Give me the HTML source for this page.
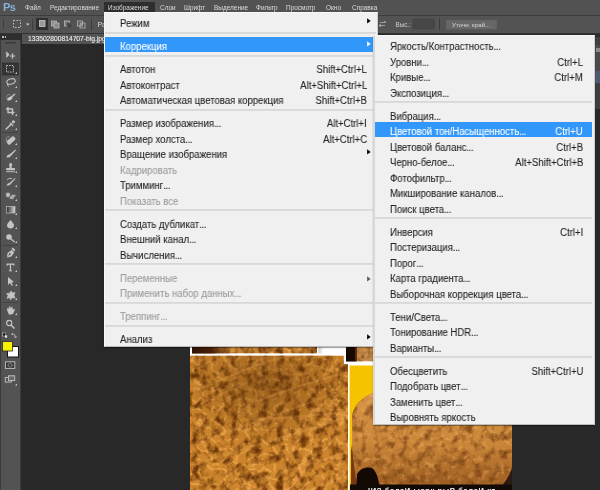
<!DOCTYPE html>
<html><head><meta charset="utf-8"><style>
*{margin:0;padding:0;box-sizing:border-box}
html,body{width:600px;height:490px;overflow:hidden;background:#282828;font-family:"Liberation Sans", sans-serif;-webkit-font-smoothing:antialiased}
.abs,div{position:absolute}
.menu{background:#f0f0f0;border:1px solid;border-color:#f8f8f8 #cfcfcf #bdbdbd #f8f8f8;box-shadow:0 1px 1px rgba(0,0,0,.35)}
.sub{border-left:2px solid #d8d8d8}
.sep{height:2px;background:linear-gradient(#d6d6d6,#dedede)}
.hl{background:#3297fa}
.t{font-size:10px;line-height:12px;color:#222;white-space:nowrap;will-change:transform;-webkit-text-stroke:0.08px currentColor;transform:scaleX(0.955);transform-origin:0 0}
.sc{transform-origin:100% 0}
.hlt{color:#fff}
.dis{color:#9a9a9a}
.arr{width:0;height:0;border-top:2.9px solid transparent;border-bottom:2.9px solid transparent;border-left:3.6px solid #000}
.mb{font-size:6.45px;line-height:8px;color:#dcdcdc;white-space:nowrap;top:3.5px;will-change:transform}
</style></head><body>
<!-- menubar -->
<div style="left:0;top:0;width:600px;height:16px;background:#525252;border-bottom:1px solid #3d3d3d"></div>
<div style="left:3px;top:1px;font-size:11px;font-weight:bold;color:#88afd8;line-height:13px;letter-spacing:-0.5px;will-change:transform">Ps</div>
<div class="mb" style="left:25px">Файл</div>
<div class="mb" style="left:50px">Редактирование</div>
<div style="left:104px;top:2px;width:51px;height:10px;background:#2e2e2e"></div>
<div class="mb" style="left:107.5px">Изображение</div>
<div class="mb" style="left:159.5px">Слои</div>
<div class="mb" style="left:183.5px">Шрифт</div>
<div class="mb" style="left:213.5px">Выделение</div>
<div class="mb" style="left:256.4px">Фильтр</div>
<div class="mb" style="left:286.4px">Просмотр</div>
<div class="mb" style="left:326px">Окно</div>
<div class="mb" style="left:351.5px">Справка</div>
<!-- options bar -->
<div style="left:0;top:16px;width:600px;height:18px;background:#535353;border-bottom:1px solid #333"></div>

<svg style="position:absolute;left:0;top:15px;will-change:transform" width="600" height="18" viewBox="0 15 600 18">
 <rect x="3" y="19" width="1" height="10" fill="#3e3e3e"/>
 <rect x="13.5" y="20.5" width="7" height="7" fill="none" stroke="#c4c4c4" stroke-width="1" stroke-dasharray="1.5 1.5"/>
 <path d="M26 23.5 L29.5 23.5 L27.75 25.5 Z" fill="#d8d8d8"/>
 <rect x="32" y="19" width="1" height="11" fill="#3c3c3c"/>
 <rect x="36" y="18" width="12" height="12" fill="#2f2f2f"/>
 <rect x="39.5" y="20.5" width="5.5" height="6" fill="#9a9a9a" stroke="#c8c8c8" stroke-width="0.8"/>
 <rect x="51.5" y="21" width="5" height="5" fill="#8a8a8a" stroke="#b8b8b8" stroke-width="0.8"/>
 <rect x="54" y="23" width="5" height="5" fill="#8a8a8a" stroke="#b8b8b8" stroke-width="0.8"/>
 <rect x="64.5" y="21" width="5" height="5" fill="#7a7a7a" stroke="#b8b8b8" stroke-width="0.8"/>
 <rect x="67" y="23" width="5" height="5" fill="#454545" stroke="#5a5a5a" stroke-width="0.8"/>
 <rect x="77.5" y="21" width="5" height="5" fill="none" stroke="#b8b8b8" stroke-width="0.8"/>
 <rect x="80" y="23" width="5" height="5" fill="none" stroke="#b8b8b8" stroke-width="0.8"/>
 <rect x="80" y="23" width="2.5" height="3" fill="#9a9a9a"/>
 <rect x="91" y="19" width="1" height="11" fill="#3c3c3c"/>
 <text x="97.5" y="27" font-family="Liberation Sans" font-size="7" fill="#dcdcdc">Растушевка</text>
 <path d="M380 22.5 H386 M384 21 L386 22.5 M379 25.5 H385 M381 24 L379 25.5 M381 27 L379 25.5" stroke="#a8a8a8" stroke-width="0.9" fill="none"/>
 <text x="395.5" y="26.5" font-family="Liberation Sans" font-size="6.3" fill="#cfcfcf">Выс.:</text>
 <rect x="413" y="19" width="21.5" height="10" fill="#474747" stroke="#404040" stroke-width="0.5"/>
 <rect x="439" y="18" width="1" height="12" fill="#3c3c3c"/>
 <rect x="446" y="20" width="51" height="9.5" rx="1" fill="#676767" stroke="#5c5c5c" stroke-width="0.6"/>
 <text x="452" y="27" font-family="Liberation Sans" font-size="6.2" fill="#d8d8d8">Уточн. край...</text>
</svg>
<!-- right strip -->
<div style="left:594px;top:34px;width:6px;height:3px;background:#2b2b2b"></div>
<div style="left:594px;top:37px;width:6px;height:8px;background:#404040"></div>
<div style="left:594px;top:45px;width:6px;height:26px;background:#4a4a4a"></div>
<div style="left:596px;top:48px;width:4px;height:4px;background:#8a8a8a"></div>
<div style="left:594px;top:71px;width:6px;height:12px;background:#4e5a72"></div>
<div style="left:594px;top:83px;width:6px;height:26px;background:#3e3e3e"></div>
<!-- toolbar -->
<div style="left:0;top:34px;width:21px;height:6px;background:#2e2e2e"></div>
<div style="left:2px;top:35.5px;width:1.6px;height:2.5px;background:#bbb"></div><div style="left:4.6px;top:35.5px;width:1.6px;height:2.5px;background:#bbb"></div>
<div style="left:0;top:40px;width:21px;height:450px;background:#535353;border-left:1px solid #3a3a3a;border-right:1px solid #3c3c3c"></div>
<svg style="position:absolute;left:0;top:0" width="20" height="490" viewBox="0 0 20 490"><rect x="5" y="42" width="11" height="1.5" fill="#3a3a3a"/><path d="M6.3 51.8 L6.6 57.5 L9.3 54.6 Z" fill="#c4c4c4" stroke="#c4c4c4" stroke-width="0.5" stroke-linejoin="round"/><path d="M9.8 56 H15.2 M12.5 53.3 V58.7" stroke="#c4c4c4" stroke-width="1.2"/><rect x="2.5" y="63" width="16" height="12" fill="#353535" stroke="#2a2a2a" stroke-width="0.6"/><rect x="6.5" y="65.5" width="7" height="6.5" fill="none" stroke="#c4c4c4" stroke-width="1" stroke-dasharray="1.4 1.2"/><path d="M15 74 L17 72 L17 74 Z" fill="#d0d0d0"/><ellipse cx="11" cy="81.5" rx="4.3" ry="2.6" fill="none" stroke="#c4c4c4" stroke-width="1.1" transform="rotate(-15 11 81.5)"/><path d="M7.5 83.5 Q7 86 9 86.5" stroke="#c4c4c4" fill="none" stroke-width="1"/><path d="M15 88 L17 86 L17 88 Z" fill="#d0d0d0"/><path d="M7.3 100.5 Q6 96.5 7.3 95 Q9 93.8 10.8 95.2" stroke="#8c8c8c" stroke-width="0.8" fill="none"/><path d="M11.3 97.3 L14.6 94.2" stroke="#c4c4c4" stroke-width="1.5" stroke-linecap="round"/><ellipse cx="9.8" cy="98.6" rx="2.7" ry="1.6" fill="#cfcfcf" transform="rotate(-28 9.8 98.6)"/><path d="M7 101 L8.5 100.3" stroke="#8c8c8c" stroke-width="0.6"/><path d="M15 102 L17 100 L17 102 Z" fill="#d0d0d0"/><path d="M8 107 V112.5 H14.5 M6 109 H12.5 V115" stroke="#c4c4c4" fill="none" stroke-width="1.4"/><path d="M15 116 L17 114 L17 116 Z" fill="#d0d0d0"/><path d="M6.2 129 L11 124.2" stroke="#c4c4c4" stroke-width="1.6" stroke-linecap="round"/><path d="M10 122.8 L13.2 126" stroke="#c4c4c4" stroke-width="1.3"/><circle cx="13.4" cy="121.8" r="1.6" fill="#c4c4c4"/><path d="M15 130 L17 128 L17 130 Z" fill="#d0d0d0"/><rect x="2" y="132" width="16" height="1" fill="#444"/><rect x="6.3" y="138.2" width="9.5" height="4.6" rx="1.6" fill="#c4c4c4" transform="rotate(-42 11 140.5)"/><path d="M9.5 136.8 Q7 136 6.3 138.6 Q6 141 7.5 143" stroke="#9a9a9a" stroke-width="0.8" fill="none"/><path d="M15 145 L17 143 L17 145 Z" fill="#d0d0d0"/><path d="M6.5 157.5 Q7 154.5 9.5 154.5 L15.5 149.5 L16 150.3 L10.8 156 Q9.5 158 6.5 157.5 Z" fill="#c4c4c4"/><path d="M15 159 L17 157 L17 159 Z" fill="#d0d0d0"/><circle cx="10.6" cy="164.6" r="1.5" fill="#c4c4c4"/><rect x="9.5" y="165" width="2.2" height="3" fill="#c4c4c4"/><rect x="6.2" y="168" width="8.8" height="2.2" rx="0.5" fill="#c4c4c4"/><rect x="6.2" y="171" width="8.8" height="1.2" fill="#a8a8a8"/><path d="M15 173 L17 171 L17 173 Z" fill="#d0d0d0"/><path d="M6.5 185.5 Q7 183 9.5 183 L15 178 L15.5 178.8 L10.5 184.3 Q9.5 186 6.5 185.5 Z" fill="#c4c4c4"/><path d="M7 180 Q9 177.5 12 178.5" stroke="#c4c4c4" fill="none" stroke-width="0.9"/><path d="M15 187 L17 185 L17 187 Z" fill="#d0d0d0"/><path d="M8 191.8 L8.8 193.6 L10.6 193.3 L9.5 194.9 L10.6 196.5 L8.8 196.2 L8 198 L7.2 196.2 L5.4 196.5 L6.5 194.9 L5.4 193.3 L7.2 193.6 Z" fill="#c4c4c4"/><path d="M9.5 197 L12.5 194.5 L16 195 L13 199.2 L10 199 Z" fill="#a8a8a8"/><path d="M15 201 L17 199 L17 201 Z" fill="#d0d0d0"/><defs><linearGradient id="gr" x1="0" x2="1"><stop offset="0" stop-color="#2a2a2a"/><stop offset="1" stop-color="#d8d8d8"/></linearGradient></defs><rect x="6.5" y="206.5" width="8.5" height="6.5" fill="url(#gr)" stroke="#bdbdbd" stroke-width="0.7"/><path d="M15 215 L17 213 L17 215 Z" fill="#d0d0d0"/><path d="M10.5 220 Q14 224 14 225 A3.4 3.4 0 0 1 7 225 Q7 224 10.5 220 Z" fill="#c4c4c4"/><path d="M15 229 L17 227 L17 229 Z" fill="#d0d0d0"/><circle cx="9" cy="237" r="2.8" fill="#c4c4c4"/><path d="M10.5 238.5 L14.5 242" stroke="#c4c4c4" stroke-width="1.3"/><path d="M15 243 L17 241 L17 243 Z" fill="#d0d0d0"/><rect x="2" y="245" width="16" height="1" fill="#444"/><path d="M6.8 257.8 L7.6 253 L11.5 250 L14.2 252.6 L11.4 256.5 Z" fill="#c4c4c4"/><rect x="11.6" y="248.6" width="3.6" height="2" fill="#c4c4c4" transform="rotate(45 13.4 249.6)"/><circle cx="9.8" cy="254" r="0.9" fill="#535353"/><path d="M7 257.6 L9.4 254.5" stroke="#535353" stroke-width="0.6"/><path d="M15 258 L17 256 L17 258 Z" fill="#d0d0d0"/><path d="M6.6 263.6 H14.4 V266 L13.8 266 Q13.5 264.8 12.4 264.8 H11.1 V270.2 L12.2 270.5 V271.2 H8.8 V270.5 L9.8 270.2 V264.8 H8.6 Q7.5 264.8 7.2 266 L6.6 266 Z" fill="#c4c4c4"/><path d="M15 272 L17 270 L17 272 Z" fill="#d0d0d0"/><path d="M8 277 L8 285 L10 283 L12 286 L13 285.3 L11.5 282.5 L14 282 Z" fill="#c4c4c4"/><path d="M15 286 L17 284 L17 286 Z" fill="#d0d0d0"/><path d="M7 298.5 L8 295.5 L6.5 293.5 L9.5 293.3 L11 291 L12.5 293 L15 292.5 L14 295.5 L15.2 298 L12.3 297.8 L10.5 299.8 L9.5 297.5 Z" fill="#c4c4c4" stroke="#c4c4c4" stroke-width="0.6" stroke-linejoin="round"/><path d="M15 300 L17 298 L17 300 Z" fill="#d0d0d0"/><rect x="2" y="302" width="16" height="1" fill="#444"/><path d="M7 310 L7.5 307.5 L8.5 309 L9 306.5 L10.3 306.5 L10.8 309 L11.5 306.8 L12.6 307.2 L12.8 310 L14 308.8 L15 309.5 L13 314 L9 314.7 Z" fill="#c4c4c4"/><path d="M15 315 L17 313 L17 315 Z" fill="#d0d0d0"/><circle cx="9.2" cy="323" r="2.6" fill="none" stroke="#c4c4c4" stroke-width="1.1"/><path d="M11 325 L14.5 328.5" stroke="#c4c4c4" stroke-width="1.5"/><rect x="2.5" y="333" width="3" height="3" fill="#111" stroke="#ddd" stroke-width="0.5"/><rect x="4.5" y="335" width="3" height="3" fill="#eee" stroke="#222" stroke-width="0.5"/><path d="M12.5 334 Q15.5 334 15.5 337 M11.5 334 L13 333 M11.5 334 L13 335 M15.5 338 L14.5 336.5 M15.5 338 L16.5 336.5" stroke="#c4c4c4" stroke-width="0.8" fill="none"/><rect x="7.5" y="346.5" width="11" height="10.5" fill="#fff" stroke="#151515" stroke-width="1"/><rect x="2.5" y="341.5" width="10" height="9.5" fill="#f7f000" stroke="#2a2a2a" stroke-width="0.8"/><rect x="5.4" y="361.8" width="9.4" height="6.6" fill="#3a3a3a" stroke="#c4c4c4" stroke-width="0.9"/><circle cx="10.1" cy="365.1" r="1.9" fill="none" stroke="#c4c4c4" stroke-width="0.9" stroke-dasharray="1.2 0.8"/><rect x="5.3" y="377.5" width="6" height="4.6" fill="#535353" stroke="#c4c4c4" stroke-width="0.9"/><rect x="8.5" y="375.8" width="6.2" height="4.8" fill="#6a6a6a" stroke="#c4c4c4" stroke-width="0.9"/><path d="M15 385.5 L17 383.5 L17 385.5 Z" fill="#d0d0d0"/></svg>
<!-- doc tab -->
<div style="left:22px;top:34px;width:90px;height:10px;background:#535353"></div>
<div style="left:27.5px;top:35px;font-size:6.7px;line-height:8px;color:#f0f0f0;white-space:nowrap;will-change:transform;-webkit-text-stroke:0.1px #f0f0f0">133502800814707-big.jpg</div>
<!-- canvas photos -->

<div style="left:190px;top:330px;width:322px;height:160px;background:#fff"></div>
<svg style="position:absolute;left:190px;top:330px;will-change:transform" width="322" height="160" viewBox="190 330 322 160">
 <defs>
  <filter id="tex" x="0" y="0" width="100%" height="100%" color-interpolation-filters="sRGB">
   <feTurbulence type="fractalNoise" baseFrequency="0.13 0.11" numOctaves="3" seed="4" result="n"/>
   <feColorMatrix in="n" type="matrix" values="0 0 0 0 0.42  0 0 0 0 0.21  0 0 0 0 0.03  2.8 0 0 0 -1.22" result="d"/>
   <feTurbulence type="turbulence" baseFrequency="0.08 0.1" numOctaves="2" seed="11" result="n2"/>
   <feColorMatrix in="n2" type="matrix" values="0 0 0 0 0.96  0 0 0 0 0.68  0 0 0 0 0.32  0 -4 0 0 0.9" result="l"/>
   <feMerge result="m"><feMergeNode in="SourceGraphic"/><feMergeNode in="l"/><feMergeNode in="d"/></feMerge>
   <feComposite in="m" in2="SourceGraphic" operator="in"/>
  </filter>
  <filter id="rock" x="0" y="0" width="100%" height="100%" color-interpolation-filters="sRGB">
   <feTurbulence type="fractalNoise" baseFrequency="0.12" numOctaves="4" seed="9" result="n"/>
   <feColorMatrix in="n" type="matrix" values="0 0 0 0 0.45  0 0 0 0 0.24  0 0 0 0 0.06  2.2 0 0 0 -1.0" result="d"/>
   <feTurbulence type="fractalNoise" baseFrequency="0.16" numOctaves="3" seed="3" result="n2"/>
   <feColorMatrix in="n2" type="matrix" values="0 0 0 0 0.95  0 0 0 0 0.68  0 0 0 0 0.36  0 1.6 0 0 -0.8" result="l"/>
   <feMerge result="m"><feMergeNode in="SourceGraphic"/><feMergeNode in="l"/><feMergeNode in="d"/></feMerge>
   <feComposite in="m" in2="SourceGraphic" operator="in"/>
  </filter>
 </defs>
 <!-- top strip photo -->
 <rect x="192" y="330" width="125" height="23.5" fill="#c58535" filter="url(#tex)"/>
 <defs><linearGradient id="sg" x1="0" x2="1"><stop offset="0" stop-color="#2e1204"/><stop offset="0.5" stop-color="#4a2008"/><stop offset="1" stop-color="#4a2008" stop-opacity="0"/></linearGradient></defs><rect x="192" y="346" width="40" height="7.5" fill="url(#sg)"/>
 <rect x="317" y="330" width="1.5" height="25" fill="#fff"/>
 <defs><linearGradient id="gg" x1="0" x2="1"><stop offset="0" stop-color="#d0d0d0"/><stop offset="1" stop-color="#fff"/></linearGradient></defs><rect x="318.5" y="347" width="5" height="6.5" fill="url(#gg)"/>

 <!-- big texture -->
 <rect x="190" y="355.5" width="158" height="134.5" fill="#cc852c" filter="url(#tex)"/>
 <defs><filter id="vb" x="-10%" y="-10%" width="120%" height="120%"><feGaussianBlur stdDeviation="0.7"/></filter>
 <radialGradient id="dk" cx="0.5" cy="0.25" r="0.6"><stop offset="0" stop-color="#5a3008" stop-opacity="0.45"/><stop offset="1" stop-color="#5a3008" stop-opacity="0"/></radialGradient>
 <clipPath id="tc"><rect x="190" y="355.5" width="158" height="134.5"/></clipPath></defs>
 <g clip-path="url(#tc)">
 <rect x="190" y="355.5" width="158" height="110" fill="url(#dk)"/>
 <g stroke="#eeaa58" stroke-opacity="0.22" stroke-width="2.4" fill="none" filter="url(#vb)">
  <path d="M192 392 Q220 380 250 368 T300 355"/>
  <path d="M192 446 Q225 432 258 421 T348 388"/>
  <path d="M240 420 Q290 418 348 412"/>
  <path d="M190 466 Q240 450 296 433 T348 415"/>
  <path d="M236 486 Q290 470 348 452"/>
  <path d="M260 400 Q300 385 348 372"/>
 </g></g>
 <rect x="343.8" y="355.5" width="6" height="8.5" fill="#fff"/>
 <rect x="346" y="330" width="30" height="31.5" fill="#c08848" filter="url(#rock)"/>
 <rect x="346" y="346" width="9.5" height="15.5" fill="#160904"/>
 <rect x="355" y="346" width="2" height="15.5" fill="#5a2a0a"/>
 <!-- rock photo -->
 <rect x="349.6" y="365.5" width="162.4" height="124.5" fill="#f6c300"/>
 <defs><linearGradient id="rg" x1="0" y1="0" x2="0" y2="1"><stop offset="0" stop-color="#d8984a"/><stop offset="0.55" stop-color="#cc883a"/><stop offset="1" stop-color="#9a5a20"/></linearGradient></defs>
 <path d="M352 490 L352 416 Q354 405 362 399 Q368 394 376 391 L512 380 L512 490 Z" fill="url(#rg)" filter="url(#rock)"/>
 <path d="M351 445 Q354 460 357 490 L351 490 Z" fill="#7a3812"/>
 <path d="M357 474 Q362 466 372 468 Q378 472 380 490 L356 490 Z" fill="#140805"/>
 <path d="M512 468 Q508 480 498 490 L512 490 Z" fill="#2a1a10"/>
 <rect x="350" y="484.5" width="162" height="5.5" fill="#120a06"/>
 <text x="368" y="493" font-family="Liberation Sans" font-size="7.5" font-weight="bold" fill="#fff" letter-spacing="0.6">lИЗ балаИ ыарк рыВ балаИ кт</text>
</svg>

<!-- menus -->
<div class="menu" style="left:103.5px;top:12px;width:274px;height:335px"></div>
<div class="t" style="left:120px;top:18.00px">Режим</div>
<svg style="position:absolute;left:367px;top:18px" width="5" height="7" viewBox="0 0 5 7"><path d="M0.1 0.2 L3.7 2.9 L0.1 5.6 Z" fill="#000"/></svg>
<div class="sep" style="left:105px;top:32px;width:271px"></div>
<div class="hl" style="left:105px;top:37px;width:271px;height:15px"></div>
<div class="t hlt" style="left:120px;top:41.00px">Коррекция</div>
<svg style="position:absolute;left:367px;top:41px" width="5" height="7" viewBox="0 0 5 7"><path d="M0.1 0.2 L3.7 2.9 L0.1 5.6 Z" fill="#fff"/></svg>
<div class="sep" style="left:105px;top:55px;width:271px"></div>
<div class="t" style="left:120px;top:64.00px">Автотон</div>
<div class="t sc" style="right:233px;top:64.00px">Shift+Ctrl+L</div>
<div class="t" style="left:120px;top:79.50px">Автоконтраст</div>
<div class="t sc" style="right:233px;top:79.50px">Alt+Shift+Ctrl+L</div>
<div class="t" style="left:120px;top:95.00px">Автоматическая цветовая коррекция</div>
<div class="t sc" style="right:233px;top:95.00px">Shift+Ctrl+B</div>
<div class="sep" style="left:105px;top:109px;width:271px"></div>
<div class="t" style="left:120px;top:118.00px">Размер изображения<span style="letter-spacing:-0.4px">...</span></div>
<div class="t sc" style="right:233px;top:118.00px">Alt+Ctrl+I</div>
<div class="t" style="left:120px;top:133.50px">Размер холста<span style="letter-spacing:-0.4px">...</span></div>
<div class="t sc" style="right:233px;top:133.50px">Alt+Ctrl+C</div>
<div class="t" style="left:120px;top:149.00px">Вращение изображения</div>
<svg style="position:absolute;left:367px;top:149px" width="5" height="7" viewBox="0 0 5 7"><path d="M0.1 0.2 L3.7 2.9 L0.1 5.6 Z" fill="#000"/></svg>
<div class="t dis" style="left:120px;top:164.50px">Кадрировать</div>
<div class="t" style="left:120px;top:180.00px">Тримминг<span style="letter-spacing:-0.4px">...</span></div>
<div class="t dis" style="left:120px;top:195.50px">Показать все</div>
<div class="sep" style="left:105px;top:209px;width:271px"></div>
<div class="t" style="left:120px;top:218.50px">Создать дубликат<span style="letter-spacing:-0.4px">...</span></div>
<div class="t" style="left:120px;top:234.00px">Внешний канал<span style="letter-spacing:-0.4px">...</span></div>
<div class="t" style="left:120px;top:249.50px">Вычисления<span style="letter-spacing:-0.4px">...</span></div>
<div class="sep" style="left:105px;top:263px;width:271px"></div>
<div class="t dis" style="left:120px;top:272.50px">Переменные</div>
<svg style="position:absolute;left:367px;top:276px" width="5" height="7" viewBox="0 0 5 7"><path d="M0.1 0.2 L3.7 2.9 L0.1 5.6 Z" fill="#5c5c5c"/></svg>
<div class="t dis" style="left:120px;top:288.00px">Применить набор данных<span style="letter-spacing:-0.4px">...</span></div>
<div class="sep" style="left:105px;top:302px;width:271px"></div>
<div class="t dis" style="left:120px;top:311.00px">Треппинг<span style="letter-spacing:-0.4px">...</span></div>
<div class="sep" style="left:105px;top:325px;width:271px"></div>
<div class="t" style="left:120px;top:334.00px">Анализ</div>
<svg style="position:absolute;left:367px;top:334px" width="5" height="7" viewBox="0 0 5 7"><path d="M0.1 0.2 L3.7 2.9 L0.1 5.6 Z" fill="#000"/></svg>
<div class="menu sub" style="left:373px;top:35px;width:222px;height:390px"></div>
<div class="t" style="left:390px;top:41.30px">Яркость/Контрастность<span style="letter-spacing:-0.4px">...</span></div>
<div class="t" style="left:390px;top:56.80px">Уровни<span style="letter-spacing:-0.4px">...</span></div>
<div class="t sc" style="right:17px;top:56.80px">Ctrl+L</div>
<div class="t" style="left:390px;top:72.30px">Кривые<span style="letter-spacing:-0.4px">...</span></div>
<div class="t sc" style="right:17px;top:72.30px">Ctrl+M</div>
<div class="t" style="left:390px;top:87.80px">Экспозиция<span style="letter-spacing:-0.4px">...</span></div>
<div class="sep" style="left:375px;top:101px;width:217px"></div>
<div class="t" style="left:390px;top:110.80px">Вибрация<span style="letter-spacing:-0.4px">...</span></div>
<div class="hl" style="left:375px;top:122px;width:217px;height:15px"></div>
<div class="t hlt" style="left:390px;top:126.30px">Цветовой тон/Насыщенность<span style="letter-spacing:-0.4px">...</span></div>
<div class="t hlt sc" style="right:17px;top:126.30px">Ctrl+U</div>
<div class="t" style="left:390px;top:141.80px">Цветовой баланс<span style="letter-spacing:-0.4px">...</span></div>
<div class="t sc" style="right:17px;top:141.80px">Ctrl+B</div>
<div class="t" style="left:390px;top:157.30px">Черно-белое<span style="letter-spacing:-0.4px">...</span></div>
<div class="t sc" style="right:17px;top:157.30px">Alt+Shift+Ctrl+B</div>
<div class="t" style="left:390px;top:172.80px">Фотофильтр<span style="letter-spacing:-0.4px">...</span></div>
<div class="t" style="left:390px;top:188.30px">Микширование каналов<span style="letter-spacing:-0.4px">...</span></div>
<div class="t" style="left:390px;top:203.80px">Поиск цвета<span style="letter-spacing:-0.4px">...</span></div>
<div class="sep" style="left:375px;top:217px;width:217px"></div>
<div class="t" style="left:390px;top:226.80px">Инверсия</div>
<div class="t sc" style="right:17px;top:226.80px">Ctrl+I</div>
<div class="t" style="left:390px;top:242.30px">Постеризация<span style="letter-spacing:-0.4px">...</span></div>
<div class="t" style="left:390px;top:257.80px">Порог<span style="letter-spacing:-0.4px">...</span></div>
<div class="t" style="left:390px;top:273.30px">Карта градиента<span style="letter-spacing:-0.4px">...</span></div>
<div class="t" style="left:390px;top:288.80px">Выборочная коррекция цвета<span style="letter-spacing:-0.4px">...</span></div>
<div class="sep" style="left:375px;top:302px;width:217px"></div>
<div class="t" style="left:390px;top:311.80px">Тени/Света<span style="letter-spacing:-0.4px">...</span></div>
<div class="t" style="left:390px;top:327.30px">Тонирование HDR<span style="letter-spacing:-0.4px">...</span></div>
<div class="t" style="left:390px;top:342.80px">Варианты<span style="letter-spacing:-0.4px">...</span></div>
<div class="sep" style="left:375px;top:356px;width:217px"></div>
<div class="t" style="left:390px;top:365.80px">Обесцветить</div>
<div class="t sc" style="right:17px;top:365.80px">Shift+Ctrl+U</div>
<div class="t" style="left:390px;top:381.30px">Подобрать цвет<span style="letter-spacing:-0.4px">...</span></div>
<div class="t" style="left:390px;top:396.80px">Заменить цвет<span style="letter-spacing:-0.4px">...</span></div>
<div class="t" style="left:390px;top:412.30px">Выровнять яркость</div>
</body></html>
